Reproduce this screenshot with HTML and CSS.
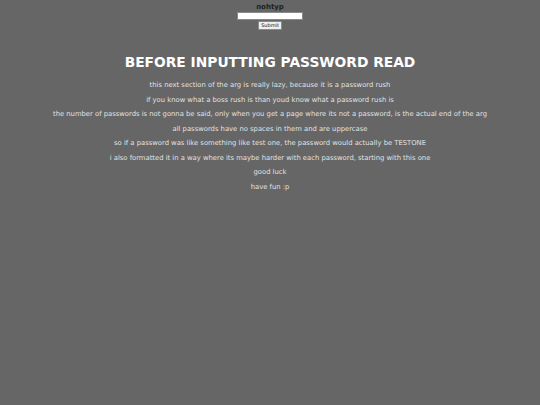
FILE: index.html
```html
<!DOCTYPE html>
<html>
<head>
<meta charset="utf-8">
<link rel="stylesheet" href="styles.css">
</head>
<body>
<form class="form">
  <label class="label">nohtyp</label>
  <input class="field" type="text">
  <button class="submit" type="button">Submit</button>
</form>
<h1 class="title">BEFORE INPUTTING PASSWORD READ</h1>
<div class="notes">
  <p>this next section of the arg is really lazy, because it is a password rush</p>
  <p>if you know what a boss rush is than youd know what a password rush is</p>
  <p>the number of passwords is not gonna be said, only when you get a page where its not a password, is the actual end of the arg</p>
  <p>all passwords have no spaces in them and are uppercase</p>
  <p>so if a password was like something like test one, the password would actually be TESTONE</p>
  <p>i also formatted it in a way where its maybe harder with each password, starting with this one</p>
  <p>good luck</p>
  <p>have fun :p</p>
</div>
</body>
</html>
```
FILE: styles.css
```css
html, body {
  margin: 0;
  padding: 0;
}
body {
  background: #666666;
  font-family: "DejaVu Sans", Verdana, sans-serif;
  width: 540px;
  height: 405px;
  overflow: hidden;
}
.form {
  display: flex;
  flex-direction: column;
  align-items: center;
  padding-top: 3px;
  margin: 0;
}
.label {
  font-size: 7px;
  font-weight: bold;
  color: #1e1e1e;
  line-height: 9px;
}
.field {
  width: 66px;
  height: 8px;
  box-sizing: border-box;
  border: 1px solid #8a8a8a;
  background: #ffffff;
  padding: 0;
  margin: 0;
}
.submit {
  margin-top: 1px;
  width: 24px;
  height: 9px;
  box-sizing: border-box;
  padding: 0;
  font-family: "DejaVu Sans", sans-serif;
  font-size: 5px;
  line-height: 7px;
  color: #111;
  background: #efefef;
  border: 1px solid #8a8a8a;
  border-radius: 1px;
}
.title {
  margin: 24px 0 0 0;
  text-align: center;
  color: #ffffff;
  font-size: 13.8px;
  line-height: 16px;
  font-weight: bold;
}
.notes {
  margin-top: 8px;
  text-align: center;
  color: #e2e2e2;
  font-size: 6.8px;
}
.notes p {
  margin: 0;
  line-height: 14.5px;
}
```
